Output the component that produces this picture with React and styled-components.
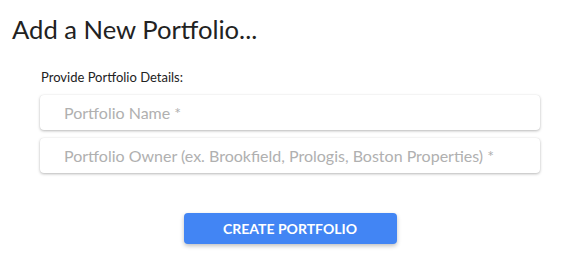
import React from "react"
import styled, { createGlobalStyle } from "styled-components"

const GlobalStyle = createGlobalStyle`
  body {
    margin: 0;
    background: #ffffff;
    font-family: Lato, "Liberation Sans", sans-serif;
  }
`

const App = () => {
  return (
    <Page>
      <GlobalStyle />
      <Title>Add a New Portfolio...</Title>
      <Form onSubmit={e => e.preventDefault()}>
        <Label>Provide Portfolio Details:</Label>
        <Input type="text" placeholder="Portfolio Name *" />
        <Input
          type="text"
          placeholder="Portfolio Owner (ex. Brookfield, Prologis, Boston Properties) *"
        />
        <ButtonRow>
          <CreateButton type="submit">Create Portfolio</CreateButton>
        </ButtonRow>
      </Form>
    </Page>
  )
}

const Page = styled.div`
  padding: 14px 12px;
`

const Title = styled.h1`
  margin: 0;
  font-family: Lato, "Liberation Sans", sans-serif;
  font-weight: 400;
  font-size: 25.6px;
  line-height: 30px;
  color: #222222;
`

const Form = styled.form`
  width: 500px;
  margin: 25px 0 0 28px;
  display: flex;
  flex-direction: column;
`

const Label = styled.label`
  font-size: 13px;
  line-height: 16px;
  color: #222222;
  margin: 0 0 2px 1px;
`

const Input = styled.input`
  box-sizing: border-box;
  height: 35px;
  margin-top: 8px;
  padding: 0 24px;
  border: none;
  border-radius: 4px;
  background: #ffffff;
  box-shadow: 0 1px 3px rgba(0, 0, 0, 0.28), 0 0 1px rgba(0, 0, 0, 0.08);
  font-family: Lato, "Liberation Sans", sans-serif;
  font-size: 16px;
  color: #333333;
  outline: none;

  &::placeholder {
    color: #b0b0b0;
  }
`

const ButtonRow = styled.div`
  display: flex;
  justify-content: center;
  margin-top: 40px;
`

const CreateButton = styled.button`
  width: 213px;
  height: 31px;
  border: none;
  border-radius: 4px;
  background: #4285f4;
  color: #ffffff;
  font-family: Lato, "Liberation Sans", sans-serif;
  font-weight: 700;
  font-size: 14px;
  text-transform: uppercase;
  box-shadow: 0 2px 4px rgba(0, 0, 0, 0.25);
  cursor: pointer;
`

export default App
